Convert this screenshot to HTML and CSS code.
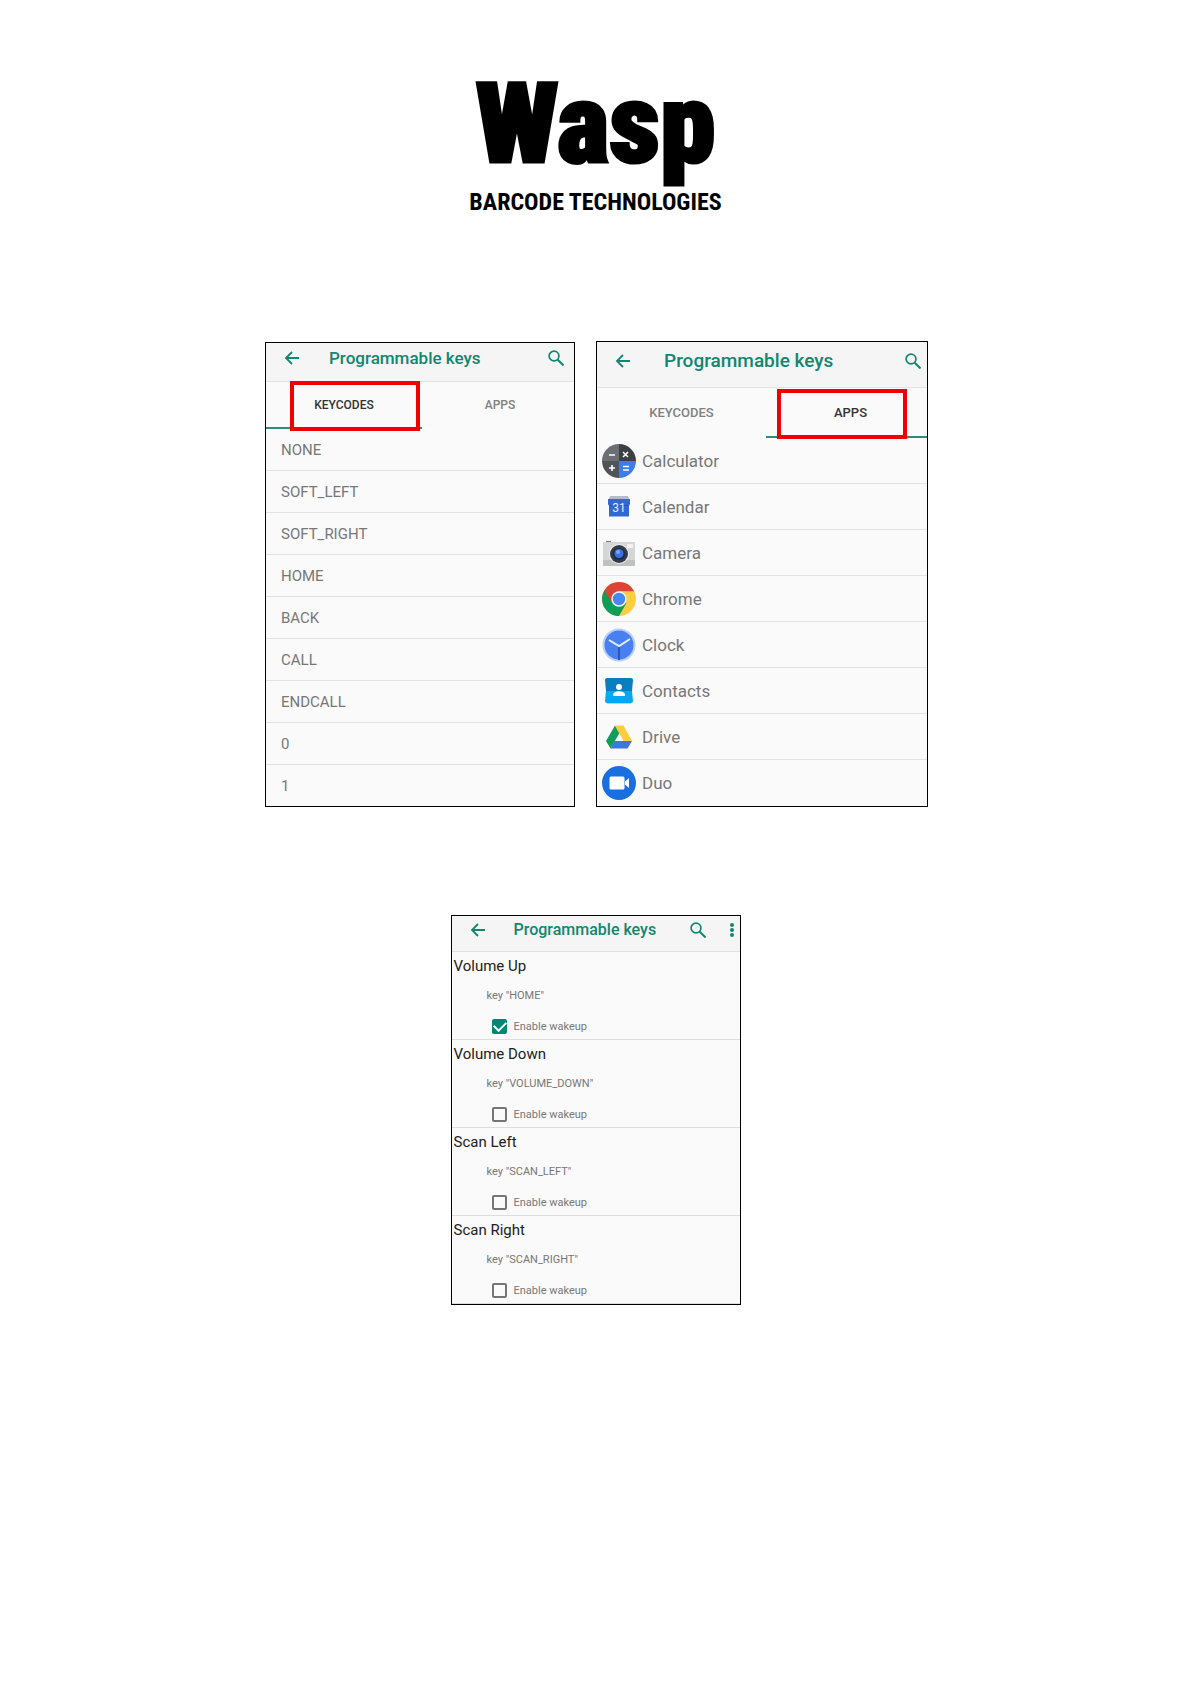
FILE: index.html
```html
<!DOCTYPE html>
<html lang="en">

<head>
 <meta charset="UTF-8">
 <meta name="viewport" content="width=device-width, initial-scale=1.0">
 <link rel="stylesheet" href="styles.css">
 <title>Wasp Barcode Technologies - Programmable keys</title>
</head>

<body>
 <!-- Shared icons -->
 <svg class="sprite" aria-hidden="true">
  <symbol id="icon-back" viewBox="0 0 16 16">
   <path d="M15 8H2M8 2L2 8l6 6" fill="none" stroke="currentColor" stroke-width="1.8" />
  </symbol>
  <symbol id="icon-search" viewBox="0 0 16 16">
   <circle cx="6" cy="6" r="4.900" fill="none" stroke="currentColor" stroke-width="1.700" />
   <path d="M9.500 9.500L15.500 15.500" fill="none" stroke="currentColor" stroke-width="2" />
  </symbol>
 </svg>

 <header class="logo">
  <h1>Wasp</h1>
  <p>BARCODE TECHNOLOGIES</p>
 </header>

 <main>
  <div class="screens">
   <section class="screen keycodes">
    <div class="bar">
     <button class="icon-button" aria-label="Back"><svg><use href="#icon-back" /></svg></button>
     <h2>Programmable keys</h2>
     <button class="icon-button" aria-label="Search"><svg><use href="#icon-search" /></svg></button>
    </div>
    <div class="tabs">
     <button class="tab active">KEYCODES</button>
     <button class="tab">APPS</button>
     <span class="highlight"></span>
    </div>
    <ul class="list">
     <li>NONE</li>
     <li>SOFT_LEFT</li>
     <li>SOFT_RIGHT</li>
     <li>HOME</li>
     <li>BACK</li>
     <li>CALL</li>
     <li>ENDCALL</li>
     <li>0</li>
     <li>1</li>
    </ul>
   </section>

   <section class="screen apps">
    <div class="bar">
     <button class="icon-button" aria-label="Back"><svg><use href="#icon-back" /></svg></button>
     <h2>Programmable keys</h2>
     <button class="icon-button" aria-label="Search"><svg><use href="#icon-search" /></svg></button>
    </div>
    <div class="tabs">
     <button class="tab">KEYCODES</button>
     <button class="tab active">APPS</button>
     <span class="highlight"></span>
    </div>
    <ul class="list">
     <li>
      <svg viewBox="0 0 34 34">
       <path d="M17 0A17 17 0 0 0 0 17h17z" fill="#6b6f73" />
       <path d="M17 0a17 17 0 0 1 17 17H17z" fill="#3c4045" />
       <path d="M0 17a17 17 0 0 0 17 17V17z" fill="#505458" />
       <path d="M34 17a17 17 0 0 1-17 17V17z" fill="#3b7ded" />
       <path d="M7 11h6M21 8l5 5M26 8l-5 5M7 24h6M10 21v6M21 22.500h6M21 26h6" stroke="#fff" stroke-width="1.600" />
      </svg>
      Calculator
     </li>
     <li>
      <svg viewBox="0 0 34 34">
       <path d="M8 6h18l2 5H6z" fill="#b3bccb" />
       <path d="M6 9h22v5l-1 2v10.500H7V16l-1-2z" fill="#3367d6" />
       <path d="M7 15h20l-1 1H8z" fill="#2856bd" />
       <text x="17" y="22" class="date">31</text>
      </svg>
      Calendar
     </li>
     <li>
      <svg viewBox="0 0 34 34">
       <path d="M4 5h5v2H4z" fill="#777" />
       <rect x="1" y="6" width="32" height="24" rx="1" fill="#d5d7d6" />
       <path d="M1 24h32v5a1 1 0 0 1-1 1H2a1 1 0 0 1-1-1z" fill="#bfc1c0" />
       <rect x="25" y="8" width="6" height="4" fill="#f1f1ef" />
       <circle cx="17" cy="18" r="10" fill="#f0f1f1" />
       <circle cx="17" cy="18" r="9" fill="#343b47" />
       <circle cx="17" cy="18" r="6" fill="#182b52" />
       <circle cx="17" cy="17.500" r="4.500" fill="#3b72df" />
       <circle cx="16" cy="16" r="2" fill="#7ea4f3" />
      </svg>
      Camera
     </li>
     <li>
      <svg viewBox="0 0 34 34">
       <circle cx="17" cy="17" r="17" fill="#ffcd40" />
       <path d="M17 17L2.300 8.500A17 17 0 0 0 17 34l7.500-13z" fill="#109d58" />
       <path d="M17 9.300h15.200A17 17 0 0 0 2.300 8.500l7.700 12.500z" fill="#db4437" />
       <circle cx="17" cy="17" r="7.700" fill="#f3f3f3" />
       <circle cx="17" cy="17" r="6.200" fill="#4688f1" />
      </svg>
      Chrome
     </li>
     <li>
      <svg viewBox="0 0 34 34">
       <circle cx="17" cy="17" r="16.500" fill="#b9cff8" />
       <circle cx="17" cy="17" r="14.500" fill="#4880ef" />
       <path d="M17 18v14" stroke="#2b56b8" stroke-width="2" />
       <path d="M7 12l10 6 11-7" fill="none" stroke="#e5edfd" stroke-width="2" />
      </svg>
      Clock
     </li>
     <li>
      <svg viewBox="0 0 34 34">
       <path d="M5 29h24v1H5z" fill="#c5cdd0" />
       <path d="M4 17h26l1 10a2 2 0 0 1-2 2H5a2 2 0 0 1-2-2z" fill="#03a9f0" />
       <path d="M5 4h24a2 2 0 0 1 2 2l-1 11H4L3 6a2 2 0 0 1 2-2z" fill="#0b7fbd" />
       <circle cx="17" cy="13" r="3" fill="#fff" />
       <path d="M11 22v-1c0-5 12-5 12 0v1z" fill="#fff" />
      </svg>
      Contacts
     </li>
     <li>
      <svg viewBox="0 0 34 34">
       <path d="M13 5.500L4 21l4.500 7.500L17.500 13z" fill="#109d58" />
       <path d="M13 5.500h8.500L30 21h-8.500z" fill="#ffcd40" />
       <path d="M12.500 21H30l-4.500 7.500h-17z" fill="#3f76dc" />
      </svg>
      Drive
     </li>
     <li>
      <svg viewBox="0 0 34 34">
       <circle cx="17" cy="17" r="17" fill="#1a6fe0" />
       <rect x="7.500" y="10.500" width="15" height="13" rx="1.500" fill="#fff" />
       <path d="M23 15.500l4-3.500v10l-4-3.500z" fill="#fff" />
      </svg>
      Duo
     </li>
    </ul>
   </section>
  </div>

  <section class="screen settings">
   <div class="bar">
    <button class="icon-button" aria-label="Back"><svg><use href="#icon-back" /></svg></button>
    <h2>Programmable keys</h2>
    <button class="icon-button" aria-label="Search"><svg><use href="#icon-search" /></svg></button>
    <button class="icon-button more" aria-label="More options">
     <svg viewBox="0 0 4 16">
      <circle cx="2" cy="3" r="2" fill="currentColor" />
      <circle cx="2" cy="8" r="2" fill="currentColor" />
      <circle cx="2" cy="13" r="2" fill="currentColor" />
     </svg>
    </button>
   </div>
   <div class="key">
    <h3>Volume Up</h3>
    <p>key "HOME"</p>
    <div class="wakeup">
     <input type="checkbox" id="wake-volume-up" checked>
     <label for="wake-volume-up">Enable wakeup</label>
    </div>
   </div>
   <div class="key">
    <h3>Volume Down</h3>
    <p>key "VOLUME_DOWN"</p>
    <div class="wakeup">
     <input type="checkbox" id="wake-volume-down">
     <label for="wake-volume-down">Enable wakeup</label>
    </div>
   </div>
   <div class="key">
    <h3>Scan Left</h3>
    <p>key "SCAN_LEFT"</p>
    <div class="wakeup">
     <input type="checkbox" id="wake-scan-left">
     <label for="wake-scan-left">Enable wakeup</label>
    </div>
   </div>
   <div class="key">
    <h3>Scan Right</h3>
    <p>key "SCAN_RIGHT"</p>
    <div class="wakeup">
     <input type="checkbox" id="wake-scan-right">
     <label for="wake-scan-right">Enable wakeup</label>
    </div>
   </div>
  </section>
 </main>
</body>

</html>
```
FILE: styles.css
```css
* {
 box-sizing: border-box;
}

body,
h1,
h2,
h3,
p,
ul {
 margin: 0;
 padding: 0;
}

body {
 background-color: #FFF;
 color: #212121;
 font-family: Roboto, Arial, sans-serif;
}

.sprite {
 display: none;
}

/* Logo */
.logo {
 padding-top: 68px;
 text-align: center;
 color: #000;
 font-family: "Roboto Condensed", Roboto, sans-serif;
 font-weight: bold;
}

.logo h1 {
 font-size: 112px;
 font-weight: 900;
 line-height: 112px;
 -webkit-text-stroke: 3px #000;
}

.logo p {
 padding-top: 8px;
 font-size: 24px;
 line-height: 28px;
}

/* Screens */
main {
 display: flex;
 flex-direction: column;
 align-items: center;
 gap: 108px;
 padding-top: 125px;
}

.screens {
 display: flex;
 flex-wrap: wrap;
 justify-content: center;
 align-items: flex-end;
 gap: 21px;
 padding-left: 2px;
}

.screen {
 overflow: hidden;
 border: 1px solid #000;
 background-color: #FAFAFA;
}

.keycodes {
 width: 310px;
}

.apps {
 width: 332px;
}

.settings {
 width: 290px;
}

/* Title bar */
.bar {
 display: flex;
 align-items: center;
 background-color: #F5F5F5;
 border-bottom: 1px solid #E2E2E2;
 color: #12866F;
}

.bar h2 {
 flex: 1;
 font-weight: 500;
}

.icon-button {
 display: flex;
 padding: 0;
 border: none;
 background: none;
 color: inherit;
}

.icon-button svg {
 width: 16px;
 height: 16px;
}

.keycodes .bar {
 height: 39px;
 padding: 0 10px 9px 18px;
}

.keycodes h2 {
 padding-left: 29px;
 font-size: 17px;
}

.apps .bar {
 height: 46px;
 padding: 0 6px 8px 18px;
}

.apps h2 {
 padding-left: 33px;
 font-size: 19px;
}

.settings .bar {
 height: 36px;
 padding: 0 6px 8px 18px;
}

.settings h2 {
 padding-left: 28px;
 font-size: 16px;
}

.settings .more {
 margin-left: 24px;
}

.settings .more svg {
 width: 4px;
}

/* Tabs */
.tabs {
 position: relative;
 display: flex;
}

.tab {
 flex: none;
 padding: 0;
 border: none;
 border-bottom: 2px solid transparent;
 background: none;
 color: #808080;
 font-family: inherit;
 font-weight: 500;
}

.tab.active {
 border-bottom-color: #2B8C7C;
 color: #333;
}

.keycodes .tab {
 width: 156px;
 height: 47px;
 font-size: 12px;
}

.apps .tab {
 width: 169px;
 height: 50px;
 font-size: 13px;
}

/* Red frame over the selected tab */
.highlight {
 position: absolute;
 top: -1px;
 left: 24px;
 width: 130px;
 height: 50px;
 border: 4px solid #F00000;
}

.apps .highlight {
 top: 1px;
 left: auto;
 right: 20px;
}

/* Lists */
.list {
 list-style: none;
 color: #777;
}

.list li {
 display: flex;
 align-items: center;
 border-bottom: 1px solid #E2E2E2;
}

.list li:last-child {
 border-bottom: none;
}

.keycodes li {
 height: 42px;
 padding-left: 15px;
 font-size: 15px;
}

.keycodes li:last-child {
 height: 41px;
}

.apps li {
 gap: 6px;
 height: 46px;
 padding-left: 5px;
 font-size: 17px;
}

.apps li svg {
 width: 34px;
 height: 34px;
}

.date {
 fill: #E8EEFB;
 font-size: 12px;
 text-anchor: middle;
}

/* Key settings */
.key {
 height: 88px;
 padding-left: 2px;
 border-bottom: 1px solid #DDD;
}

.key h3 {
 font-size: 15px;
 font-weight: normal;
 line-height: 28px;
}

.key p {
 padding-left: 33px;
 color: #777;
 font-size: 11px;
 line-height: 32px;
}

.wakeup {
 display: flex;
 align-items: center;
 gap: 7px;
 height: 29px;
 padding-left: 38px;
 color: #777;
 font-size: 11px;
}

.wakeup input {
 appearance: none;
 width: 15px;
 height: 15px;
 margin: 0;
 border: 2px solid #757575;
 border-radius: 2px;
}

.wakeup input:checked {
 display: grid;
 place-items: center;
 border-color: #058573;
 background-color: #058573;
}

/* Tick */
.wakeup input:checked::before {
 content: "";
 width: 10px;
 height: 6px;
 margin-bottom: 3px;
 border: solid #FFF;
 border-width: 0 0 2px 2px;
 transform: rotate(-45deg);
}
```
